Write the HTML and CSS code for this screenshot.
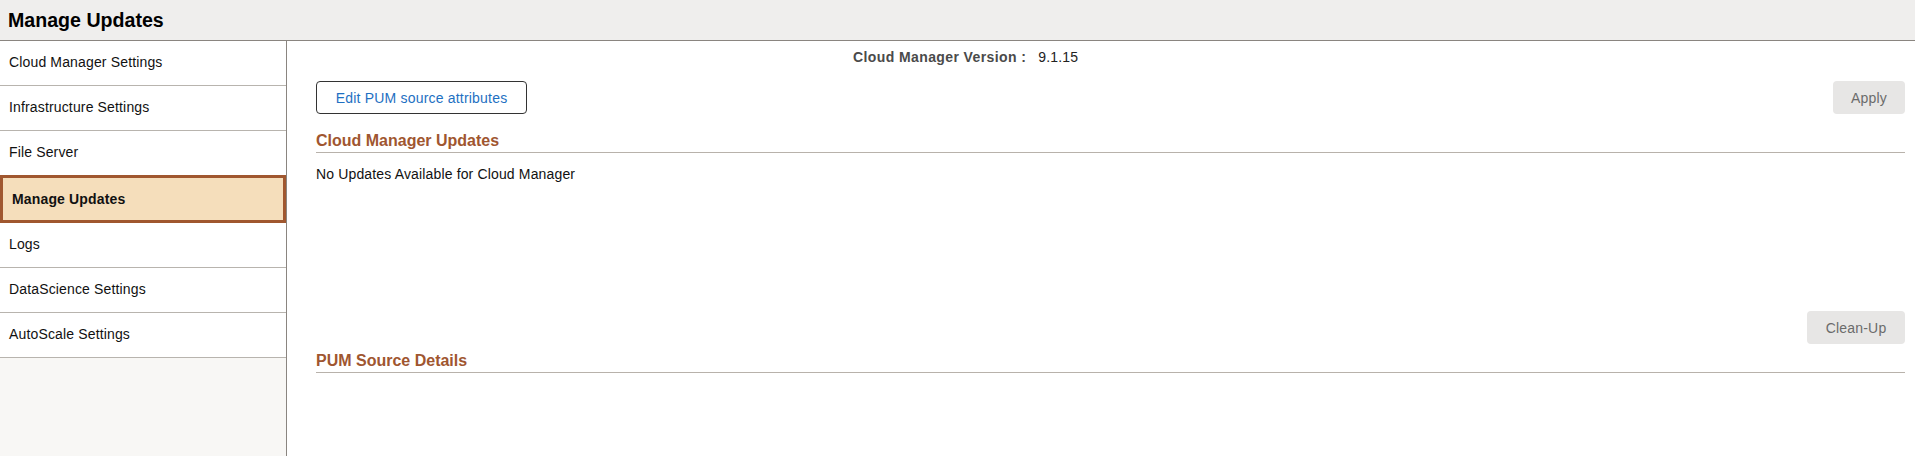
FILE: index.html
```html
<!DOCTYPE html>
<html>
<head>
<meta charset="utf-8">
<title>Manage Updates</title>
<link rel="stylesheet" href="styles.css">
</head>
<body>
<header class="page-header">Manage Updates</header>
<div class="layout">
  <nav class="sidebar">
    <div class="nav-item">Cloud Manager Settings</div>
    <div class="nav-item">Infrastructure Settings</div>
    <div class="nav-item">File Server</div>
    <div class="nav-item active">Manage Updates</div>
    <div class="nav-item">Logs</div>
    <div class="nav-item">DataScience Settings</div>
    <div class="nav-item">AutoScale Settings</div>
  </nav>
  <main class="content">
    <div class="version-row">
      <span class="version-label">Cloud Manager Version :</span>
      <span class="version-value">9.1.15</span>
    </div>
    <div class="toolbar">
      <button class="btn btn-outline">Edit PUM source attributes</button>
      <button class="btn btn-disabled">Apply</button>
    </div>
    <h2 class="section-title">Cloud Manager Updates</h2>
    <p class="message">No Updates Available for Cloud Manager</p>
    <div class="toolbar cleanup-row">
      <button class="btn btn-disabled btn-cleanup">Clean-Up</button>
    </div>
    <h2 class="section-title pum-title">PUM Source Details</h2>
  </main>
</div>
</body>
</html>
```

FILE: styles.css
```css
html, body {
  margin: 0;
  padding: 0;
  height: 100%;
}
body {
  font-family: "Liberation Sans", Arial, sans-serif;
  font-size: 14px;
  letter-spacing: 0.15px;
  color: #000;
  background: #fff;
  display: flex;
  flex-direction: column;
}
.page-header {
  height: 41px;
  box-sizing: border-box;
  line-height: 40px;
  padding-left: 8px;
  font-size: 19.6px;
  letter-spacing: 0;
  font-weight: bold;
  background: #efeeed;
  border-bottom: 1px solid #8a8580;
}
.layout {
  flex: 1;
  display: flex;
}
.sidebar {
  width: 286px;
  flex: none;
  background: #f8f7f5;
  border-right: 1px solid #8a8580;
  display: flex;
  flex-direction: column;
}
.nav-item {
  height: 45px;
  box-sizing: border-box;
  border-bottom: 1px solid #b8b4ae;
  background: #fff;
  padding: 0 0 3px 9px;
  display: flex;
  align-items: center;
  color: #111;
}
.nav-item.active {
  height: 48px;
  margin-top: -1px;
  border: 3px solid #a0572f;
  background: #f5debb;
  font-weight: bold;
  padding: 0 0 1px 9px;
}
.content {
  flex: 1;
  padding: 0 10px 0 29px;
}
.version-row {
  margin-top: 8px;
  margin-left: 537px;
  line-height: 16px;
  display: flex;
  gap: 12px;
}
.version-label {
  font-weight: bold;
  letter-spacing: 0.4px;
  color: #4a4a4a;
}
.version-value {
  color: #222;
}
.toolbar {
  margin-top: 16px;
  display: flex;
  justify-content: space-between;
  align-items: center;
}
.btn {
  font-family: "Liberation Sans", Arial, sans-serif;
  font-size: 14px;
  letter-spacing: 0.2px;
  height: 33px;
  border-radius: 4px;
  box-sizing: border-box;
  padding: 0;
}
.btn-outline {
  width: 211px;
  background: #fff;
  border: 1px solid #333;
  color: #1e70c2;
}
.btn-disabled {
  width: 72px;
  background: #e7e6e5;
  border: none;
  color: #6b6b6b;
}
.btn-cleanup {
  width: 98px;
}
.cleanup-row {
  margin-top: 129px;
  justify-content: flex-end;
}
.section-title {
  margin: 17px 0 0 0;
  font-size: 16px;
  line-height: 18px;
  letter-spacing: 0;
  font-weight: bold;
  color: #9f5630;
  padding: 1px 0 2px 0;
  border-bottom: 1px solid #b8b2ab;
}
.pum-title {
  margin-top: 7px;
}
.message {
  margin: 13px 0 0 0;
  line-height: 16px;
  color: #111;
}
```
